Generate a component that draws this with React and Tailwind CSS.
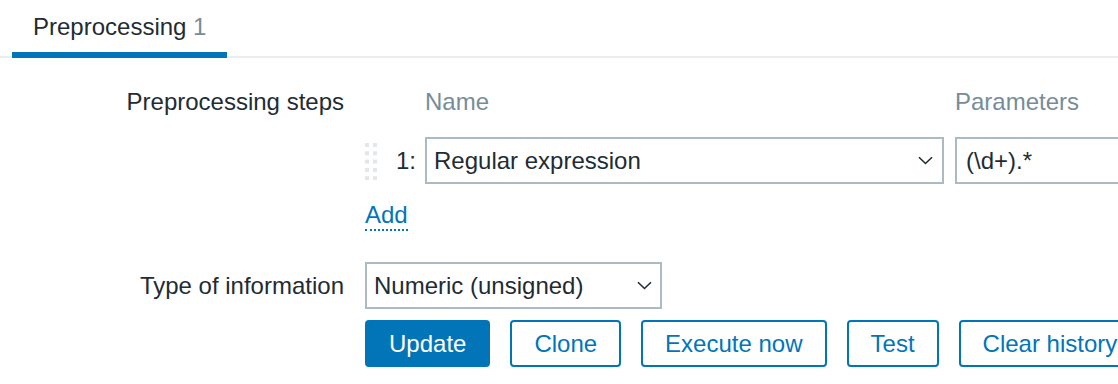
import React from "react";

function Chevron() {
  return (
    <svg width="15" height="9" viewBox="0 0 15 9" fill="none">
      <path d="M1 1.2 L7.5 7.5 L14 1.2" stroke="#1f2c33" strokeWidth="1.6" />
    </svg>
  );
}

function DragHandle() {
  const rows = [0, 1, 2, 3, 4];
  return (
    <svg width="12" height="37" viewBox="0 0 12 37">
      {rows.map((r) => (
        <g key={r}>
          <rect x="0" y={r * 8.3} width="4" height="4" fill="#e3e7ea" />
          <rect x="8" y={r * 8.3} width="4" height="4" fill="#e3e7ea" />
        </g>
      ))}
    </svg>
  );
}

export default function App() {
  const btn =
    "shrink-0 h-[47px] px-[22px] rounded-[4px] border-2 border-[#0275b8] flex items-center whitespace-nowrap";
  return (
    <div className="w-[1118px] h-[384px] overflow-hidden bg-white font-['Liberation_Sans',Arial,sans-serif] text-[24px] leading-[28px] text-[#1f2c33]">
      <div className="flex border-b-2 border-[#ebeef0] pl-[12px]">
        <div className="-mb-[2px] w-[215px] border-b-[6px] border-[#0275b8] pl-[21px] pt-[13px] pb-[11px] whitespace-nowrap">
          Preprocessing <span className="text-[#768d99]">1</span>
        </div>
      </div>

      <div className="pt-[30px]">
        <div className="flex">
          <div className="w-[344px] shrink-0 text-right mr-[21px] whitespace-nowrap">
            Preprocessing steps
          </div>
          <div className="flex flex-col">
            <div className="flex text-[#768d99] whitespace-nowrap">
              <div className="w-[60px] shrink-0" />
              <div className="w-[530px] shrink-0">Name</div>
              <div>Parameters</div>
            </div>
            <div className="flex items-center mt-[21px]">
              <div className="w-[12px] shrink-0 flex items-center pt-[1px]">
                <DragHandle />
              </div>
              <div className="ml-[19px] mr-[9px] w-[20px] shrink-0">1:</div>
              <div className="w-[519px] h-[47px] shrink-0 border-2 border-[#acbbc2] flex items-center justify-between pl-[7px] pr-[9px] whitespace-nowrap">
                <span>Regular expression</span>
                <Chevron />
              </div>
              <div className="ml-[11px] w-[320px] h-[47px] shrink-0 border-2 border-[#acbbc2] flex items-center pl-[9px] whitespace-nowrap">
                (\d+).*
              </div>
            </div>
            <div className="mt-[17px]">
              <span className="inline-block text-[#0275b8] border-b-2 border-dotted border-[#0275b8]">
                Add
              </span>
            </div>
          </div>
        </div>

        <div className="flex items-center mt-[31px]">
          <div className="w-[344px] shrink-0 text-right mr-[21px] whitespace-nowrap">
            Type of information
          </div>
          <div className="w-[297px] h-[47px] shrink-0 border-2 border-[#acbbc2] flex items-center justify-between pl-[7px] pr-[8px] whitespace-nowrap">
            <span>Numeric (unsigned)</span>
            <Chevron />
          </div>
        </div>

        <div className="flex flex-nowrap gap-[20px] ml-[365px] mt-[11px]">
          <button className={btn + " bg-[#0275b8] text-white"}>Update</button>
          <button className={btn + " bg-white text-[#0275b8]"}>Clone</button>
          <button className={btn + " bg-white text-[#0275b8]"}>Execute now</button>
          <button className={btn + " bg-white text-[#0275b8]"}>Test</button>
          <button className={btn + " bg-white text-[#0275b8]"}>Clear history</button>
        </div>
      </div>
    </div>
  );
}
